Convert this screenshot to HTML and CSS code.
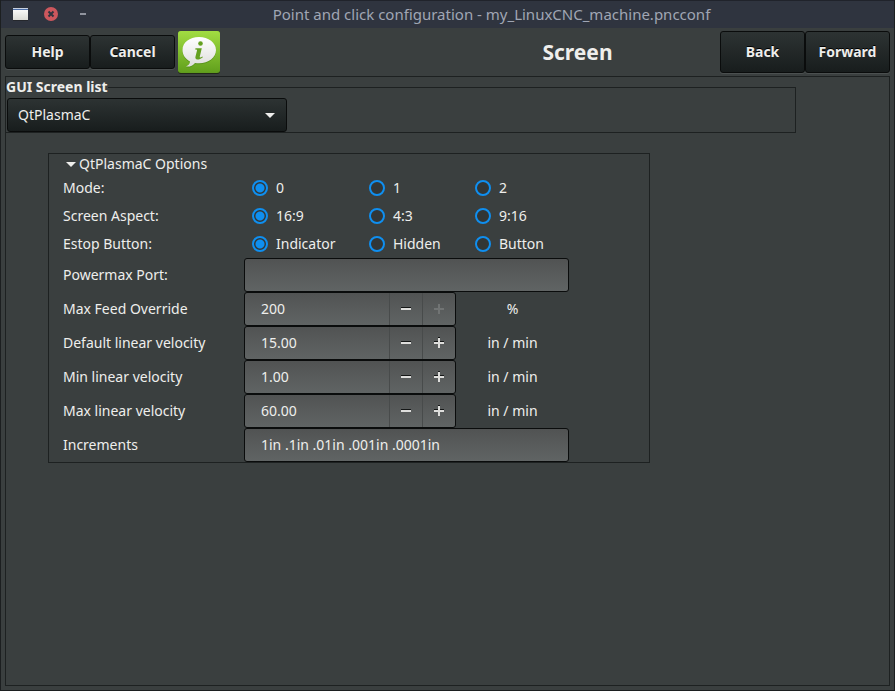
FILE: index.html
```html
<!DOCTYPE html>
<html lang="en">
<head>
<meta charset="utf-8">
<title>Point and click configuration - my_LinuxCNC_machine.pncconf</title>
<link rel="stylesheet" href="styles.css">
</head>
<body>
<div class="window">
  <header class="titlebar">
    <div class="window-controls">
      <svg width="15" height="13" viewBox="0 0 15 13" aria-hidden="true">
        <defs><linearGradient id="winfill" x1="0" y1="0" x2="0" y2="1"><stop offset="0" stop-color="#fff"/><stop offset="1" stop-color="#dcdcd6"/></linearGradient></defs>
        <rect width="15" height="12" fill="url(#winfill)"/>
        <rect width="15" height="1" fill="#c9d2e2"/>
        <rect y="1" width="15" height="1" fill="#4c6ea8"/>
        <rect y="12" width="15" height="1" fill="#25272c"/>
      </svg>
      <button class="titlebar-button" aria-label="Close">
        <svg width="14" height="14" viewBox="0 0 14 14"><circle cx="7" cy="7" r="7" fill="#cc575d"/><path d="M4.500 4.500l5 5m0-5l-5 5" stroke="#2f343f" stroke-width="2"/></svg>
      </button>
      <button class="titlebar-button" aria-label="Minimize">
        <svg width="6" height="14" viewBox="0 0 6 14"><rect y="6" width="6" height="2" fill="#90949e"/></svg>
      </button>
    </div>
    <div class="window-title">Point and click configuration - my_LinuxCNC_machine.pncconf</div>
  </header>

  <div class="toolbar">
    <button class="button">Help</button>
    <button class="button">Cancel</button>
    <svg class="info-icon" width="44" height="44" viewBox="0 0 44 44" role="img" aria-label="Information">
      <defs>
        <linearGradient id="green" x1="0" y1="0" x2="0" y2="1"><stop offset="0" stop-color="#a2dd42"/><stop offset="1" stop-color="#62a01d"/></linearGradient>
        <linearGradient id="bubble" x1="0" y1="0" x2="0" y2="1"><stop offset="0" stop-color="#fff"/><stop offset="1" stop-color="#dededc"/></linearGradient>
      </defs>
      <rect x="1" y="2" width="42" height="42" rx="3" fill="#222a18"/>
      <rect x="1" y="1" width="42" height="42" rx="3" fill="#609c1e"/>
      <rect x="1" y="1" width="42" height="41" rx="3" fill="url(#green)"/>
      <path d="M22 8C12.500 8 5.500 13.500 5.500 21c0 5 3 9 7.500 11.500 0 2-1.500 4-4 5 4 .4 7-1.200 9-3.600 1.300.3 2.600.4 4 .4 9.500 0 17-6 17-13.300S31.500 8 22 8z" fill="#477d18" opacity=".5"/>
      <path d="M22 7C12.500 7 5.500 12.500 5.500 20c0 5 3 9 7.500 11.500 0 2-1.500 4-4 5 4 .4 7-1.200 9-3.600 1.300.3 2.600.4 4 .4 9.500 0 17-6 17-13.300S31.500 7 22 7z" fill="url(#bubble)"/>
      <circle cx="23.500" cy="13.500" r="2.300" fill="#64a020"/>
      <path d="M18.500 18.200h6.300l-2 8.300c-.3 1.200.4 1.300 2.600-.1l.5.900c-2.300 1.800-4 2.400-5.500 2.300-1.800-.1-2.300-1.400-1.900-3l1.500-6.200c.2-.9-.3-1-1.900-1z" fill="#64a020"/>
    </svg>
    <h1 class="page-title">Screen</h1>
    <button class="button tall">Back</button>
    <button class="button tall">Forward</button>
  </div>

  <main class="page">
    <section class="screen-list">
      <label class="screen-list-label" for="gui">GUI Screen list</label>
      <div class="screen-list-body">
        <div class="combo">
          <select id="gui"><option>QtPlasmaC</option></select>
          <svg class="combo-arrow" width="10" height="5" viewBox="0 0 10 5" aria-hidden="true"><path d="M0 0h10L5 5z" fill="#eeeeec"/></svg>
        </div>
      </div>
    </section>

    <section class="options">
      <button class="expander" aria-expanded="true"><svg width="10" height="5" viewBox="0 0 10 5" aria-hidden="true"><path d="M0 0h10L5 5z" fill="#eeeeec"/></svg>QtPlasmaC Options</button>

      <div class="row choice" role="radiogroup" aria-labelledby="mode">
        <span id="mode">Mode:</span>
        <div class="radios">
          <label><input type="radio" name="mode" checked>0</label>
          <label><input type="radio" name="mode">1</label>
          <label><input type="radio" name="mode">2</label>
        </div>
      </div>
      <div class="row choice" role="radiogroup" aria-labelledby="aspect">
        <span id="aspect">Screen Aspect:</span>
        <div class="radios">
          <label><input type="radio" name="aspect" checked>16:9</label>
          <label><input type="radio" name="aspect">4:3</label>
          <label><input type="radio" name="aspect">9:16</label>
        </div>
      </div>
      <div class="row choice" role="radiogroup" aria-labelledby="estop">
        <span id="estop">Estop Button:</span>
        <div class="radios">
          <label><input type="radio" name="estop" checked>Indicator</label>
          <label><input type="radio" name="estop">Hidden</label>
          <label><input type="radio" name="estop">Button</label>
        </div>
      </div>

      <div class="row">
        <label for="port">Powermax Port:</label>
        <input class="entry" id="port" type="text">
      </div>
      <div class="row">
        <label for="feed">Max Feed Override</label>
        <div class="measure">
          <div class="spin"><input id="feed" type="text" value="200"><button class="minus" aria-label="Decrease"></button><button class="plus" aria-label="Increase" disabled></button></div>
          <span class="unit">%</span>
        </div>
      </div>
      <div class="row">
        <label for="default-velocity">Default linear velocity</label>
        <div class="measure">
          <div class="spin"><input id="default-velocity" type="text" value="15.00"><button class="minus" aria-label="Decrease"></button><button class="plus" aria-label="Increase"></button></div>
          <span class="unit">in / min</span>
        </div>
      </div>
      <div class="row">
        <label for="min-velocity">Min linear velocity</label>
        <div class="measure">
          <div class="spin"><input id="min-velocity" type="text" value="1.00"><button class="minus" aria-label="Decrease"></button><button class="plus" aria-label="Increase"></button></div>
          <span class="unit">in / min</span>
        </div>
      </div>
      <div class="row">
        <label for="max-velocity">Max linear velocity</label>
        <div class="measure">
          <div class="spin"><input id="max-velocity" type="text" value="60.00"><button class="minus" aria-label="Decrease"></button><button class="plus" aria-label="Increase"></button></div>
          <span class="unit">in / min</span>
        </div>
      </div>
      <div class="row">
        <label for="increments">Increments</label>
        <input class="entry" id="increments" type="text" value="1in .1in .01in .001in .0001in">
      </div>
    </section>
  </main>
</div>
</body>
</html>
```
FILE: styles.css
```css
* { box-sizing: border-box; }

body {
  margin: 0;
  background: #3a3f3f;
  color: #eeeeec;
  font: 14px/20px "Noto Sans", sans-serif;
}

button, input, select { font: inherit; color: inherit; margin: 0; }

.window {
  display: flex;
  flex-direction: column;
  min-height: 100vh;
  border: 1px solid #1c1f20;
  border-top: 0;
}

.titlebar {
  display: grid;
  grid-template-columns: 96px 1fr 8px;
  align-items: center;
  height: 28px;
  background: #2f343f;
  box-shadow: inset 0 1px #20232b;
  color: #a0a6b4;
}
.window-controls { display: flex; align-items: center; gap: 16px; padding-left: 12px; }
.titlebar-button { display: flex; padding: 0; border: 0; background: none; }
.titlebar-button + .titlebar-button { margin-left: 6px; }
.window-title { text-align: center; font-size: 15px; }

.toolbar {
  display: flex;
  align-items: center;
  height: 48px;
  padding: 0 4px;
}

.button {
  width: 85px;
  height: 34px;
  padding: 0;
  border: 1px solid #0a0c0c;
  border-radius: 3px;
  background: linear-gradient(#2d3333, #181d1d);
  box-shadow: 0 1px #4b5050;
  font-weight: bold;
  text-shadow: 0 -1px #000;
}
.button.tall { height: 42px; }

.info-icon { margin-left: 2px; }
.page-title { flex: 1; margin: 0 0 0 214px; text-align: center; font-size: 21px; line-height: 28px; }

.page {
  flex: 1;
  margin: 0 4px 4px;
  border: 1px solid #1d2121;
}

.screen-list { position: relative; margin-right: 93px; padding-top: 10px; }
.screen-list-label {
  position: absolute;
  top: 0;
  left: 0;
  background: #3a3f3f;
  font-weight: bold;
}
.screen-list-body {
  padding: 10px 1px 0;
  border: 1px solid #1d2121;
  border-left: 0;
}
.combo { position: relative; width: 280px; }
.combo select {
  display: block;
  width: 100%;
  height: 34px;
  padding: 0 10px;
  border: 1px solid #0a0c0c;
  border-radius: 3px;
  background: linear-gradient(#2d3333, #181d1d);
  appearance: none;
}
.combo-arrow { position: absolute; top: 15px; right: 12px; pointer-events: none; }

.options {
  width: 602px;
  max-width: calc(100% - 42px);
  margin: 20px 0 0 42px;
  padding-left: 14px;
  border: 1px solid #1d2121;
}
.expander {
  display: flex;
  align-items: center;
  gap: 3px;
  height: 20px;
  padding: 0 3px;
  border: 0;
  background: none;
}

.row { display: grid; grid-template-columns: 181px 325px; align-items: center; height: 34px; }
.row.choice { height: 28px; }

.radios { display: grid; grid-template-columns: 117px 106px 1fr; padding-left: 8px; }
.radios label { display: flex; align-items: center; gap: 8px; }
.radios input {
  width: 16px;
  height: 16px;
  border: 2px solid #0f8ff0;
  border-radius: 50%;
  background: #323636;
  appearance: none;
}
.radios input:checked { background: radial-gradient(circle, #0f8ff0 4px, #323636 5px); }

.entry, .spin {
  height: 34px;
  border: 1px solid #0a0c0c;
  border-radius: 3px;
  background: linear-gradient(#515353, #606464);
}
.entry { width: 100%; padding: 0 16px 2px; }

.measure { display: flex; align-items: center; }
.spin { display: flex; width: 212px; overflow: hidden; }
.spin input {
  flex: 1;
  min-width: 0;
  padding: 0 16px;
  border: 0;
  background: none;
}
.spin button {
  display: grid;
  place-items: center;
  width: 33px;
  padding: 0;
  border: 0;
  border-left: 1px solid #484b4b;
  background: none;
}
.minus::before, .plus::before, .plus::after {
  content: "";
  grid-area: 1 / 1;
  width: 10px;
  height: 2px;
  background: #dededc;
  box-shadow: 0 -1px #151717;
}
.plus::after { width: 2px; height: 10px; }
.plus:disabled::before, .plus:disabled::after { background: #717474; box-shadow: none; }
.unit { flex: 1; text-align: center; }
```
